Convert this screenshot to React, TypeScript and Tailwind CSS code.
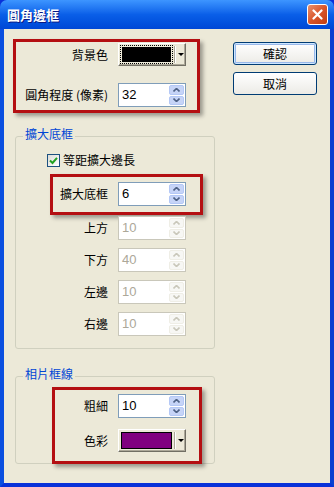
import React from 'react';

const cjk = { fontFamily: '"Noto Sans CJK TC", "Noto Sans", sans-serif' };
const num = { fontFamily: '"Liberation Sans", Arial, sans-serif' };

const Arrow = ({ up, disabled }: { up?: boolean; disabled?: boolean }) => (
  <svg width="7" height="4" viewBox="0 0 7 4">
    <path
      d={up ? 'M0.5 3.5 L3.5 0.5 L6.5 3.5' : 'M0.5 0.5 L3.5 3.5 L6.5 0.5'}
      fill="none"
      stroke={disabled ? '#c9c7ba' : '#4d6185'}
      strokeWidth="1.6"
    />
  </svg>
);

const Spin = ({ value, disabled }: { value: string; disabled?: boolean }) => (
  <div
    className={`flex h-[24px] w-[68px] border bg-white ${
      disabled ? 'border-[#c9c7ba]' : 'border-[#7f9db9]'
    }`}
  >
    <span
      style={num}
      className={`flex-1 pl-[3px] text-[13px] leading-[21px] ${disabled ? 'text-[#aca899]' : 'text-black'}`}
    >
      {value}
    </span>
    <div className="flex w-[17px] flex-col gap-px p-px">
      <div
        className={`flex flex-1 items-center justify-center rounded-[2px] border ${
          disabled ? 'border-[#efeee6] bg-[#f7f7f4]' : 'border-[#b4c8f6] bg-[#c6d4f7]'
        }`}
      >
        <Arrow up disabled={disabled} />
      </div>
      <div
        className={`flex flex-1 items-center justify-center rounded-[2px] border ${
          disabled ? 'border-[#efeee6] bg-[#f7f7f4]' : 'border-[#b4c8f6] bg-[#c6d4f7]'
        }`}
      >
        <Arrow disabled={disabled} />
      </div>
    </div>
  </div>
);

const ColorBtn = ({ fill, focus }: { fill: string; focus?: boolean }) => (
  <div className="flex h-[23px] w-[68px] border border-b-[#716f64] border-l-white border-r-[#716f64] border-t-white bg-[#ece9d8] shadow-[inset_-1px_-1px_0_#aca899]">
    <div className={`m-[1px] flex flex-1 p-[1px] ${focus ? 'border border-dotted border-black' : ''}`}>
      <div className={`flex-1 ${focus ? '' : 'border border-black'}`} style={{ background: fill }} />
    </div>
    <div className="my-[2px] w-[2px] border-l border-r border-l-[#aca899] border-r-white" />
    <div className="flex w-[9px] items-center justify-center">
      <div className="h-0 w-0 border-x-[3px] border-t-[3px] border-x-transparent border-t-black" />
    </div>
  </div>
);

const Row = ({ label, w, children }: { label: string; w: string; children: React.ReactNode }) => (
  <div className="flex items-center gap-[10px]">
    <span className={`${w} text-right text-[12px] leading-[14px] text-black`}>{label}</span>
    {children}
  </div>
);

const RedBox = ({ className, children }: { className: string; children: React.ReactNode }) => (
  <div className={`border-[3px] border-[#b40f12] shadow-[3px_3px_4px_rgba(0,0,0,0.35)] ${className}`}>
    {children}
  </div>
);

const XpButton = ({ label, focus }: { label: string; focus?: boolean }) => (
  <button
    className={`h-[23px] w-[84px] rounded-[3px] border border-[#003c74] bg-linear-to-b from-white to-[#ecebe6] text-[12px] leading-[14px] text-black ${
      focus ? 'shadow-[inset_0_0_0_1px_#cee7ff,inset_0_0_0_2px_#98b8ea]' : ''
    }`}
  >
    {label}
  </button>
);

export default function App() {
  return (
    <div style={cjk} className="flex h-[487px] w-[334px] flex-col overflow-hidden bg-[#0831d9]">
      {/* Title bar */}
      <div className="flex h-[29px] shrink-0 items-center justify-between rounded-t-[7px] bg-linear-to-b from-[#3d95ff] via-[#0a5fe8] to-[#0047d6] pl-[7px] pr-[6px]">
        <span className="text-[13px] font-bold leading-none text-white [text-shadow:1px_1px_0_#0a1883]">
          圓角邊框
        </span>
        <div className="flex h-[21px] w-[21px] items-center justify-center rounded-[3px] border border-white bg-linear-to-br from-[#e8906c] via-[#d9552a] to-[#c13c10]">
          <svg width="11" height="11" viewBox="0 0 11 11">
            <path d="M1.5 1.5 L9.5 9.5 M9.5 1.5 L1.5 9.5" stroke="white" strokeWidth="2.2" strokeLinecap="round" />
          </svg>
        </div>
      </div>

      {/* Body */}
      <div className="flex flex-1 border-b-[4px] border-l-[4px] border-r-[4px] border-b-[#0831d9] border-l-[#0a4fe0] border-r-[#0a3fd0] bg-[#ece9d8]">
        <div className="flex w-[211px] flex-col pl-[9px] pt-[10px]">
          <RedBox className="w-[187px] pb-[3px] pt-[1px]">
            <div className="flex flex-col gap-[17px]">
              <Row label="背景色" w="w-[92px]">
                <ColorBtn fill="#000" focus />
              </Row>
              <Row label="圓角程度 (像素)" w="w-[92px]">
                <Spin value="32" />
              </Row>
            </div>
          </RedBox>

          <fieldset className="ml-[2px] mt-[14px] w-[200px] rounded-[3px] border border-[#d0d0bf] px-0 pb-[12px]">
            <legend className="ml-[7px] px-[2px] pb-[4px] text-[12px] leading-[14px] text-[#0046d5]">擴大底框</legend>
            <div className="ml-[31px] mt-[8px] flex items-center gap-[3px]">
              <div className="flex h-[13px] w-[13px] items-center justify-center border border-[#1c5180] bg-linear-to-br from-[#dcdcd7] to-white">
                <svg width="9" height="9" viewBox="0 0 9 9">
                  <path d="M1 4.5 L3.5 7 L8 1.8" fill="none" stroke="#21a121" strokeWidth="2" />
                </svg>
              </div>
              <span className="text-[12px] leading-[14px] text-black">等距擴大邊長</span>
            </div>
            <RedBox className="ml-[34px] mt-[7px] w-[153px] pb-[6px] pt-[5px]">
              <Row label="擴大底框" w="w-[55px]">
                <Spin value="6" />
              </Row>
            </RedBox>
            <div className="mt-[1px] flex flex-col gap-[8px]">
              <Row label="上方" w="w-[92px]">
                <Spin value="10" disabled />
              </Row>
              <Row label="下方" w="w-[92px]">
                <Spin value="40" disabled />
              </Row>
              <Row label="左邊" w="w-[92px]">
                <Spin value="10" disabled />
              </Row>
              <Row label="右邊" w="w-[92px]">
                <Spin value="10" disabled />
              </Row>
            </div>
          </fieldset>

          <fieldset className="ml-[2px] mt-[18px] w-[200px] rounded-[3px] border border-[#d0d0bf] px-0 pb-0">
            <legend className="ml-[7px] px-[2px] pb-[4px] text-[12px] leading-[14px] text-[#0046d5]">相片框線</legend>
            <RedBox className="-mb-[1px] ml-[36px] mt-[2px] w-[150px] pb-[9px] pt-[4px]">
              <div className="flex flex-col gap-[11px]">
                <Row label="粗細" w="w-[53px]">
                  <Spin value="10" />
                </Row>
                <Row label="色彩" w="w-[53px]">
                  <ColorBtn fill="#800080" />
                </Row>
              </div>
            </RedBox>
          </fieldset>
        </div>

        <div className="flex flex-col gap-[7px] pl-[18px] pt-[13px]">
          <XpButton label="確認" focus />
          <XpButton label="取消" />
        </div>
      </div>
    </div>
  );
}
